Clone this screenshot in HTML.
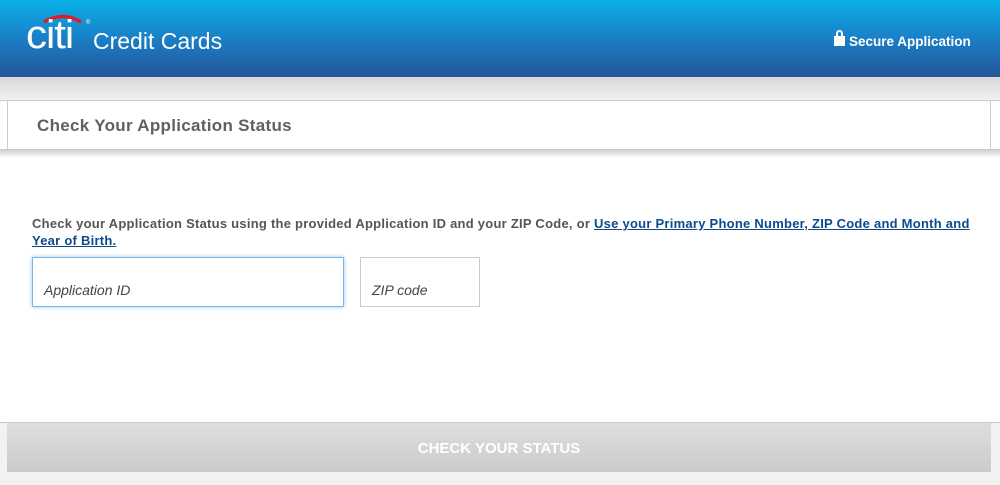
<!DOCTYPE html>
<html><head><style>
*{margin:0;padding:0;box-sizing:border-box}
body{width:1000px;height:485px;overflow:hidden;background:#f2f2f2;font-family:"Liberation Sans",sans-serif;position:relative}
.hdr{position:absolute;left:0;top:0;width:1000px;height:77px;background:linear-gradient(#08b0e8,#1a7fc6 50%,#245599)}
.band{position:absolute;left:0;top:77px;width:1000px;height:23px;background:linear-gradient(#d8d8d8,#f0f0f0)}
.card{position:absolute;left:0;top:100px;width:1000px;height:50px;background:#fff;border-top:1px solid #ccc;border-bottom:1px solid #ccc}
.card:before{content:"";position:absolute;left:7px;top:0;bottom:0;border-left:1px solid #ccc}
.card:after{content:"";position:absolute;left:990px;top:0;bottom:0;border-left:1px solid #ccc}
.shadow{position:absolute;left:0;top:150px;width:1000px;height:8px;background:linear-gradient(#d0d0d0,#fff)}
.main{position:absolute;left:0;top:158px;width:1000px;height:264px;background:#fff}
.foot{position:absolute;left:0;top:422px;width:1000px;height:63px;background:#f2f2f2;border-top:1px solid #c8c8c8}
.btn{position:absolute;left:7px;top:423px;width:984px;height:49px;background:linear-gradient(#dedede,#cbcbcb);color:#fff;font-weight:bold;font-size:15px;text-align:center;line-height:52px}
.inp{position:absolute;background:#fff;border:1px solid #ccc;font-style:italic;font-size:14px;color:#444;padding:24px 0 0 11px}
</style></head><body>
<div class="hdr">
 <svg style="position:absolute;left:26px;top:12px" width="70" height="45"><path d="M18 10 Q37 -1 55 10" stroke="#e21a23" stroke-width="3.5" fill="none"/><text x="60" y="12" fill="#fff" font-size="6">®</text></svg>
 <div style="position:absolute;left:26px;top:13px;color:#fff;font-size:40px;letter-spacing:-1px;transform:scaleX(1.05);transform-origin:left">citi</div>
 <div style="position:absolute;left:93px;top:28px;color:#fff;font-size:23px">Credit Cards</div>
 <div style="position:absolute;left:834px;top:34px;color:#fff;font-weight:bold;font-size:13.5px"><span style="display:inline-block;position:relative;width:11px;height:10px;background:#fff;margin-right:4px;top:0"><span style="position:absolute;left:2px;top:-6px;width:7px;height:8px;border:2px solid #fff;border-bottom:none;border-radius:4px 4px 0 0"></span></span>Secure Application</div>
</div>
<div class="band"></div>
<div class="card"><div style="position:absolute;left:37px;top:15px;font-size:17px;font-weight:bold;color:#606060;letter-spacing:0.3px">Check Your Application Status</div></div>
<div class="shadow"></div>
<div class="main">
 <div style="position:absolute;left:32px;top:57px;width:945px;font-size:13px;font-weight:bold;color:#555;line-height:17px;letter-spacing:0.25px">Check your Application Status using the provided Application ID and your ZIP Code, or <a style="color:#0b4b8c;text-decoration:underline">Use your Primary Phone Number, ZIP Code and Month and Year of Birth.</a></div>
</div>
<div class="foot"></div>
<div class="btn">CHECK YOUR STATUS</div>
<div class="inp" style="left:32px;top:257px;width:312px;height:50px;border-color:#79b7ea;box-shadow:0 0 4px rgba(80,160,230,.6)">Application ID</div>
<div class="inp" style="left:360px;top:257px;width:120px;height:50px">ZIP code</div>
</body></html>
